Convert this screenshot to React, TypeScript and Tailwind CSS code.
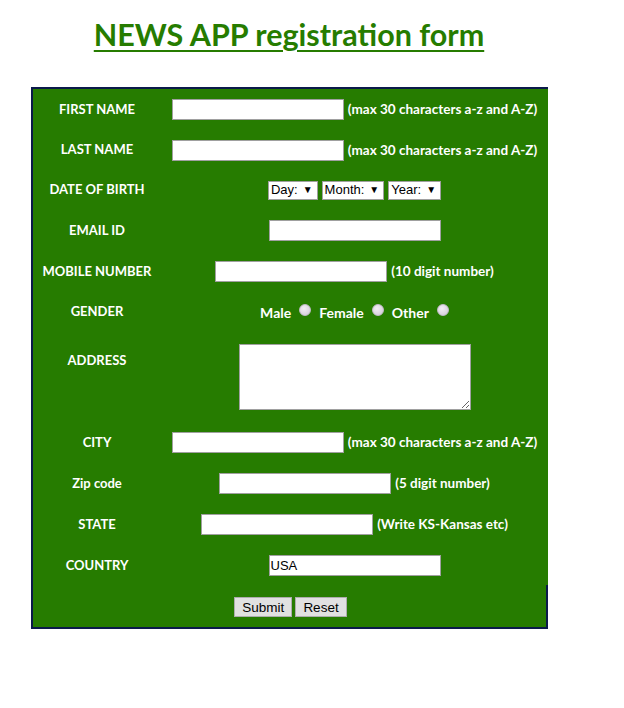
import React from 'react';

const GREEN = 'bg-[#267c00]';

const Label: React.FC<{ children: React.ReactNode; className?: string }> = ({ children, className = '' }) => (
  <div className={`w-[128px] shrink-0 text-center text-[13px] font-bold text-white ${className}`}>{children}</div>
);

const TextBox: React.FC<{ width?: string; value?: string }> = ({ width = 'w-[172px]', value }) => (
  <input
    type="text"
    defaultValue={value}
    className={`${width} h-[21px] bg-white border border-[#a0a0a0] px-[1px] text-[13px] text-black font-['Liberation_Sans',Arial,sans-serif] outline-none`}
  />
);

const Note: React.FC<{ children: React.ReactNode }> = ({ children }) => (
  <span className="text-[13.5px] font-bold text-white whitespace-nowrap">{children}</span>
);

const FakeSelect: React.FC<{ label: string }> = ({ label }) => (
  <span className="inline-flex items-center h-[19px] bg-white border border-[#a0a0a0] pl-[2px] pr-[4px] gap-[5px] text-[13px] text-black font-['Liberation_Sans',Arial,sans-serif]">
    {label}
    <span className="text-[10px] leading-none">▼</span>
  </span>
);

const Radio: React.FC = () => (
  <span className="inline-block w-[12px] h-[12px] rounded-full bg-[radial-gradient(circle_at_40%_35%,#f2eef4,#cfc8d6)] border border-[#c4bccb] -translate-y-[2px]" />
);

const Row: React.FC<{ label: React.ReactNode; children: React.ReactNode; h?: string }> = ({ label, children, h = 'h-[41px]' }) => (
  <div className={`flex items-center ${h}`}>
    <Label>{label}</Label>
    <div className="flex-1 flex items-center justify-center gap-[4px]">{children}</div>
  </div>
);

export default function App() {
  return (
    <div className="w-[624px] min-h-[708px] bg-white font-['Lato','Open_Sans',sans-serif]">
      <div className="w-[578px] pt-[14px] text-center">
        <h1 className="text-[30.5px] font-bold text-[#267c00] underline decoration-[2px] underline-offset-[4px] leading-[40px]">
          NEWS APP registration form
        </h1>
      </div>

      <div className={`relative ml-[31px] mt-[33px] w-[517px] ${GREEN} border-l-2 border-t-2 border-b-2 border-[#0b1a4a]`}>
        <div className="absolute -right-0 -bottom-[2px] w-[2px] h-[44px] bg-[#0b1a4a]" />

        <Row label="FIRST NAME">
          <TextBox />
          <Note>(max 30 characters a-z and A-Z)</Note>
        </Row>
        <Row label="LAST NAME" h="h-[40px]">
          <TextBox />
          <Note>(max 30 characters a-z and A-Z)</Note>
        </Row>
        <Row label="DATE OF BIRTH" h="h-[40px]">
          <FakeSelect label="Day:" />
          <FakeSelect label="Month:" />
          <FakeSelect label="Year:" />
        </Row>
        <Row label="EMAIL ID" h="h-[41px]">
          <TextBox />
        </Row>
        <Row label="MOBILE NUMBER" h="h-[41px]">
          <TextBox />
          <Note>(10 digit number)</Note>
        </Row>
        <Row label="GENDER" h="h-[40px]">
          <div className="flex items-center gap-[8px] text-[14px] font-bold text-white">
            <span>Male</span>
            <Radio />
            <span>Female</span>
            <Radio />
            <span>Other</span>
            <Radio />
          </div>
        </Row>
        <div className="flex h-[90px]">
          <Label className="pt-[19px]">ADDRESS</Label>
          <div className="flex-1 flex items-center justify-center">
            <textarea className="w-[232px] h-[66px] bg-white border border-[#a0a0a0] outline-none" />
          </div>
        </div>
        <Row label="CITY">
          <TextBox />
          <Note>(max 30 characters a-z and A-Z)</Note>
        </Row>
        <Row label="Zip code">
          <TextBox />
          <Note>(5 digit number)</Note>
        </Row>
        <Row label="STATE">
          <TextBox />
          <Note>(Write KS-Kansas etc)</Note>
        </Row>
        <Row label="COUNTRY">
          <TextBox value="USA" />
        </Row>
        <div className="flex h-[41px] items-center justify-center gap-[3px]">
          <button className="h-[20px] px-[7px] bg-[#e1e1e1] border border-[#adadad] text-[13.5px] text-black font-['Liberation_Sans',Arial,sans-serif]">
            Submit
          </button>
          <button className="h-[20px] px-[7px] bg-[#e1e1e1] border border-[#adadad] text-[13.5px] text-black font-['Liberation_Sans',Arial,sans-serif]">
            Reset
          </button>
        </div>
      </div>
    </div>
  );
}
